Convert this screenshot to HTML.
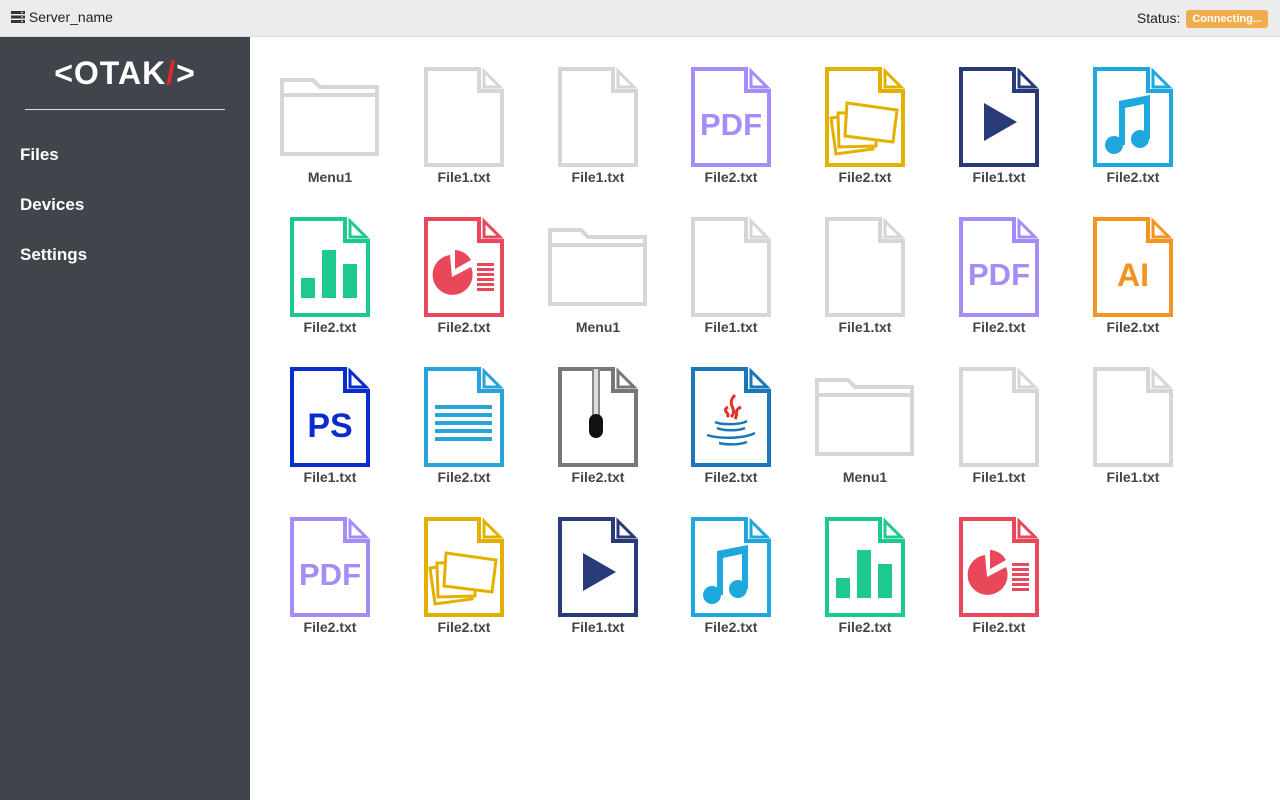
<!DOCTYPE html>
<html><head><meta charset="utf-8"><style>
*{margin:0;padding:0;box-sizing:border-box}
body{width:1280px;height:800px;overflow:hidden;background:#fff;font-family:"Liberation Sans",sans-serif;position:relative}
.top{position:absolute;left:0;top:0;width:1280px;height:37px;background:#ececec;border-bottom:1px solid #dcdcdc}
.srv{position:absolute;left:11px;top:9px;font-size:14px;color:#222}
.st{position:absolute;right:12px;top:10px;font-size:14px;color:#222}
.badge{display:inline-block;background:#f0ad4e;color:#fff;font-size:11px;font-weight:bold;padding:3px 6px;border-radius:3px;vertical-align:1px;margin-left:2px}
.side{position:absolute;left:0;top:37px;width:250px;height:763px;background:#40444b}
.logo{position:absolute;left:0;width:250px;top:18px;text-align:center;color:#fff;font-size:32px;font-weight:bold;letter-spacing:1px}
.logo b{color:#e3262b}
.hr{position:absolute;left:25px;top:72px;width:200px;height:1px;background:#ddd}
.nav{position:absolute;left:20px;color:#fff;font-size:17px;font-weight:bold}
.it{position:absolute;width:120px;text-align:center}
.it svg{display:block;margin:0 auto}
.lb{position:absolute;left:0;width:120px;top:102px;font-size:14px;font-weight:bold;color:#444;text-align:center}
</style></head><body>
<div class="top"><div class="srv"><svg width="14" height="12" style="vertical-align:-1px" viewBox="0 0 14 12"><rect x="0" y="0" width="14" height="3" fill="#333"/><rect x="0" y="4.5" width="14" height="3" fill="#333"/><rect x="0" y="9" width="14" height="3" fill="#333"/><rect x="10" y="1" width="2" height="1" fill="#eee"/><rect x="10" y="5.5" width="2" height="1" fill="#eee"/><rect x="10" y="10" width="2" height="1" fill="#eee"/></svg> Server_name</div>
<div class="st">Status: <span class="badge">Connecting...</span></div></div>
<div class="side"><div class="logo">&lt;OTAK<b>/</b>&gt;</div><div class="hr"></div>
<div class="nav" style="top:108px">Files</div><div class="nav" style="top:158px">Devices</div><div class="nav" style="top:208px">Settings</div></div>

<!-- Row 1 -->
<div class="it" style="left:270px;top:67px"><svg width="100" height="100" viewBox="0 0 100 100"><path d="M2 13H33L40 20H97V87H2Z M2 28H97" fill="none" stroke="#d6d6d6" stroke-width="4"/></svg><div class="lb">Menu1</div></div>
<div class="it" style="left:404px;top:67px"><svg width="80" height="100" viewBox="0 0 80 100"><path d="M2 2H55V24H78V98H2Z" fill="none" stroke="#d6d6d6" stroke-width="4"/><path d="M60 4L76 20H60Z" fill="none" stroke="#d6d6d6" stroke-width="3"/></svg><div class="lb">File1.txt</div></div>
<div class="it" style="left:538px;top:67px"><svg width="80" height="100" viewBox="0 0 80 100"><path d="M2 2H55V24H78V98H2Z" fill="none" stroke="#d6d6d6" stroke-width="4"/><path d="M60 4L76 20H60Z" fill="none" stroke="#d6d6d6" stroke-width="3"/></svg><div class="lb">File1.txt</div></div>
<div class="it" style="left:671px;top:67px"><svg width="80" height="100" viewBox="0 0 80 100"><path d="M2 2H55V24H78V98H2Z" fill="none" stroke="#a58cf6" stroke-width="4"/><path d="M60 4L76 20H60Z" fill="none" stroke="#a58cf6" stroke-width="3"/><text x="40" y="68" text-anchor="middle" font-family="Liberation Sans" font-weight="bold" font-size="31" fill="#a58cf6">PDF</text></svg><div class="lb">File2.txt</div></div>
<div class="it" style="left:805px;top:67px"><svg width="80" height="100" viewBox="0 0 80 100"><path d="M2 2H55V24H78V98H2Z" fill="none" stroke="#e4b000" stroke-width="4"/><path d="M60 4L76 20H60Z" fill="none" stroke="#e4b000" stroke-width="3"/><g stroke="#e4b000" stroke-width="3" fill="#fff"><path d="M6 51L44 46L48 82L11 87Z"/><path d="M13 46L51 45L51 79L14 80Z"/><path d="M22 36L72 43L68 75L20 69Z"/></g></svg><div class="lb">File2.txt</div></div>
<div class="it" style="left:939px;top:67px"><svg width="80" height="100" viewBox="0 0 80 100"><path d="M2 2H55V24H78V98H2Z" fill="none" stroke="#283b78" stroke-width="4"/><path d="M60 4L76 20H60Z" fill="none" stroke="#283b78" stroke-width="3"/><path d="M25 36L58 55L25 74Z" fill="#283b78"/></svg><div class="lb">File1.txt</div></div>
<div class="it" style="left:1073px;top:67px"><svg width="80" height="100" viewBox="0 0 80 100"><path d="M2 2H55V24H78V98H2Z" fill="none" stroke="#1ea8de" stroke-width="4"/><path d="M60 4L76 20H60Z" fill="none" stroke="#1ea8de" stroke-width="3"/><path d="M26 34L57 28V72H51V37L32 41V78H26Z" fill="#1ea8de"/><circle cx="21" cy="78" r="9" fill="#1ea8de"/><circle cx="47" cy="72" r="9" fill="#1ea8de"/></svg><div class="lb">File2.txt</div></div>

<!-- Row 2 -->
<div class="it" style="left:270px;top:217px"><svg width="80" height="100" viewBox="0 0 80 100"><path d="M2 2H55V24H78V98H2Z" fill="none" stroke="#1ec98e" stroke-width="4"/><path d="M60 4L76 20H60Z" fill="none" stroke="#1ec98e" stroke-width="3"/><rect x="11" y="61" width="14" height="20" fill="#1ec98e"/><rect x="32" y="33" width="14" height="48" fill="#1ec98e"/><rect x="53" y="47" width="14" height="34" fill="#1ec98e"/></svg><div class="lb">File2.txt</div></div>
<div class="it" style="left:404px;top:217px"><svg width="80" height="100" viewBox="0 0 80 100"><path d="M2 2H55V24H78V98H2Z" fill="none" stroke="#e8485a" stroke-width="4"/><path d="M60 4L76 20H60Z" fill="none" stroke="#e8485a" stroke-width="3"/><path d="M26 38A20 20 0 1 0 47 50L28 60Z" fill="#e8485a"/><path d="M31 33A19 19 0 0 1 47 43L31 52Z" fill="#e8485a"/><g fill="#e8485a"><rect x="53" y="46" width="17" height="3"/><rect x="53" y="51" width="17" height="3"/><rect x="53" y="56" width="17" height="3"/><rect x="53" y="61" width="17" height="3"/><rect x="53" y="66" width="17" height="3"/><rect x="53" y="71" width="17" height="3"/></g></svg><div class="lb">File2.txt</div></div>
<div class="it" style="left:538px;top:217px"><svg width="100" height="100" viewBox="0 0 100 100"><path d="M2 13H33L40 20H97V87H2Z M2 28H97" fill="none" stroke="#d6d6d6" stroke-width="4"/></svg><div class="lb">Menu1</div></div>
<div class="it" style="left:671px;top:217px"><svg width="80" height="100" viewBox="0 0 80 100"><path d="M2 2H55V24H78V98H2Z" fill="none" stroke="#d6d6d6" stroke-width="4"/><path d="M60 4L76 20H60Z" fill="none" stroke="#d6d6d6" stroke-width="3"/></svg><div class="lb">File1.txt</div></div>
<div class="it" style="left:805px;top:217px"><svg width="80" height="100" viewBox="0 0 80 100"><path d="M2 2H55V24H78V98H2Z" fill="none" stroke="#d6d6d6" stroke-width="4"/><path d="M60 4L76 20H60Z" fill="none" stroke="#d6d6d6" stroke-width="3"/></svg><div class="lb">File1.txt</div></div>
<div class="it" style="left:939px;top:217px"><svg width="80" height="100" viewBox="0 0 80 100"><path d="M2 2H55V24H78V98H2Z" fill="none" stroke="#a58cf6" stroke-width="4"/><path d="M60 4L76 20H60Z" fill="none" stroke="#a58cf6" stroke-width="3"/><text x="40" y="68" text-anchor="middle" font-family="Liberation Sans" font-weight="bold" font-size="31" fill="#a58cf6">PDF</text></svg><div class="lb">File2.txt</div></div>
<div class="it" style="left:1073px;top:217px"><svg width="80" height="100" viewBox="0 0 80 100"><path d="M2 2H55V24H78V98H2Z" fill="none" stroke="#f39322" stroke-width="4"/><path d="M60 4L76 20H60Z" fill="none" stroke="#f39322" stroke-width="3"/><text x="40" y="69" text-anchor="middle" font-family="Liberation Sans" font-weight="bold" font-size="32" fill="#f39322">AI</text></svg><div class="lb">File2.txt</div></div>

<!-- Row 3 -->
<div class="it" style="left:270px;top:367px"><svg width="80" height="100" viewBox="0 0 80 100"><path d="M2 2H55V24H78V98H2Z" fill="none" stroke="#0a2ccc" stroke-width="4"/><path d="M60 4L76 20H60Z" fill="none" stroke="#0a2ccc" stroke-width="3"/><text x="40" y="70" text-anchor="middle" font-family="Liberation Sans" font-weight="bold" font-size="34" fill="#0a2ccc">PS</text></svg><div class="lb">File1.txt</div></div>
<div class="it" style="left:404px;top:367px"><svg width="80" height="100" viewBox="0 0 80 100"><path d="M2 2H55V24H78V98H2Z" fill="none" stroke="#27a3d8" stroke-width="4"/><path d="M60 4L76 20H60Z" fill="none" stroke="#27a3d8" stroke-width="3"/><g fill="#27a3d8"><rect x="11" y="38" width="57" height="4"/><rect x="11" y="46" width="57" height="4"/><rect x="11" y="54" width="57" height="4"/><rect x="11" y="62" width="57" height="4"/><rect x="11" y="70" width="57" height="4"/></g></svg><div class="lb">File2.txt</div></div>
<div class="it" style="left:538px;top:367px"><svg width="80" height="100" viewBox="0 0 80 100"><path d="M2 2H55V24H78V98H2Z" fill="none" stroke="#777" stroke-width="4"/><path d="M60 4L76 20H60Z" fill="none" stroke="#777" stroke-width="3"/><rect x="34" y="2" width="8" height="50" fill="#888"/><rect x="36" y="2" width="4" height="50" fill="#ddd"/><rect x="31" y="47" width="14" height="24" rx="7" fill="#111"/></svg><div class="lb">File2.txt</div></div>
<div class="it" style="left:671px;top:367px"><svg width="80" height="100" viewBox="0 0 80 100"><path d="M2 2H55V24H78V98H2Z" fill="none" stroke="#1b78b8" stroke-width="4"/><path d="M60 4L76 20H60Z" fill="none" stroke="#1b78b8" stroke-width="3"/><path d="M44 28C34 38 48 42 40 50M50 40C42 44 48 46 44 52M37 40C30 44 40 46 36 50" fill="none" stroke="#e4302c" stroke-width="3"/><path d="M24 55C30 58 50 58 56 54M26 61C32 64 48 64 54 61M16 68C28 72 52 72 64 66M28 76C36 78 48 78 56 75" fill="none" stroke="#1b78b8" stroke-width="2.5"/></svg><div class="lb">File2.txt</div></div>
<div class="it" style="left:805px;top:367px"><svg width="100" height="100" viewBox="0 0 100 100"><path d="M2 13H33L40 20H97V87H2Z M2 28H97" fill="none" stroke="#d6d6d6" stroke-width="4"/></svg><div class="lb">Menu1</div></div>
<div class="it" style="left:939px;top:367px"><svg width="80" height="100" viewBox="0 0 80 100"><path d="M2 2H55V24H78V98H2Z" fill="none" stroke="#d6d6d6" stroke-width="4"/><path d="M60 4L76 20H60Z" fill="none" stroke="#d6d6d6" stroke-width="3"/></svg><div class="lb">File1.txt</div></div>
<div class="it" style="left:1073px;top:367px"><svg width="80" height="100" viewBox="0 0 80 100"><path d="M2 2H55V24H78V98H2Z" fill="none" stroke="#d6d6d6" stroke-width="4"/><path d="M60 4L76 20H60Z" fill="none" stroke="#d6d6d6" stroke-width="3"/></svg><div class="lb">File1.txt</div></div>

<!-- Row 4 -->
<div class="it" style="left:270px;top:517px"><svg width="80" height="100" viewBox="0 0 80 100"><path d="M2 2H55V24H78V98H2Z" fill="none" stroke="#a58cf6" stroke-width="4"/><path d="M60 4L76 20H60Z" fill="none" stroke="#a58cf6" stroke-width="3"/><text x="40" y="68" text-anchor="middle" font-family="Liberation Sans" font-weight="bold" font-size="31" fill="#a58cf6">PDF</text></svg><div class="lb">File2.txt</div></div>
<div class="it" style="left:404px;top:517px"><svg width="80" height="100" viewBox="0 0 80 100"><path d="M2 2H55V24H78V98H2Z" fill="none" stroke="#e4b000" stroke-width="4"/><path d="M60 4L76 20H60Z" fill="none" stroke="#e4b000" stroke-width="3"/><g stroke="#e4b000" stroke-width="3" fill="#fff"><path d="M6 51L44 46L48 82L11 87Z"/><path d="M13 46L51 45L51 79L14 80Z"/><path d="M22 36L72 43L68 75L20 69Z"/></g></svg><div class="lb">File2.txt</div></div>
<div class="it" style="left:538px;top:517px"><svg width="80" height="100" viewBox="0 0 80 100"><path d="M2 2H55V24H78V98H2Z" fill="none" stroke="#283b78" stroke-width="4"/><path d="M60 4L76 20H60Z" fill="none" stroke="#283b78" stroke-width="3"/><path d="M25 36L58 55L25 74Z" fill="#283b78"/></svg><div class="lb">File1.txt</div></div>
<div class="it" style="left:671px;top:517px"><svg width="80" height="100" viewBox="0 0 80 100"><path d="M2 2H55V24H78V98H2Z" fill="none" stroke="#1ea8de" stroke-width="4"/><path d="M60 4L76 20H60Z" fill="none" stroke="#1ea8de" stroke-width="3"/><path d="M26 34L57 28V72H51V37L32 41V78H26Z" fill="#1ea8de"/><circle cx="21" cy="78" r="9" fill="#1ea8de"/><circle cx="47" cy="72" r="9" fill="#1ea8de"/></svg><div class="lb">File2.txt</div></div>
<div class="it" style="left:805px;top:517px"><svg width="80" height="100" viewBox="0 0 80 100"><path d="M2 2H55V24H78V98H2Z" fill="none" stroke="#1ec98e" stroke-width="4"/><path d="M60 4L76 20H60Z" fill="none" stroke="#1ec98e" stroke-width="3"/><rect x="11" y="61" width="14" height="20" fill="#1ec98e"/><rect x="32" y="33" width="14" height="48" fill="#1ec98e"/><rect x="53" y="47" width="14" height="34" fill="#1ec98e"/></svg><div class="lb">File2.txt</div></div>
<div class="it" style="left:939px;top:517px"><svg width="80" height="100" viewBox="0 0 80 100"><path d="M2 2H55V24H78V98H2Z" fill="none" stroke="#e8485a" stroke-width="4"/><path d="M60 4L76 20H60Z" fill="none" stroke="#e8485a" stroke-width="3"/><path d="M26 38A20 20 0 1 0 47 50L28 60Z" fill="#e8485a"/><path d="M31 33A19 19 0 0 1 47 43L31 52Z" fill="#e8485a"/><g fill="#e8485a"><rect x="53" y="46" width="17" height="3"/><rect x="53" y="51" width="17" height="3"/><rect x="53" y="56" width="17" height="3"/><rect x="53" y="61" width="17" height="3"/><rect x="53" y="66" width="17" height="3"/><rect x="53" y="71" width="17" height="3"/></g></svg><div class="lb">File2.txt</div></div>
</body></html>
